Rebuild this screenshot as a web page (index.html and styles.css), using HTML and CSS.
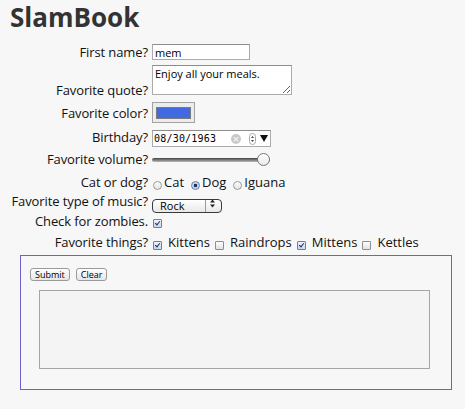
FILE: index.html
```html
<!DOCTYPE html>
<html>
<head>
<meta charset="utf-8">
<link rel="stylesheet" href="styles.css">
</head>
<body>
<h1 class="title">SlamBook</h1>
<form class="slam">
  <div class="grid">
    <label class="lbl l1">First name?</label>
    <input class="txt c1" type="text" value="mem">

    <label class="lbl l2">Favorite quote?</label>
    <textarea class="quote c2">Enjoy all your meals.</textarea>

    <label class="lbl l3">Favorite color?</label>
    <input class="color c3" type="color" value="#4169e1">

    <label class="lbl l4">Birthday?</label>
    <div class="date c4">
      <input class="date-text" type="text" value="08/30/1963">
      <span class="date-clear">×</span>
      <span class="date-spin"><svg width="7" height="12" viewBox="0 0 7 12"><rect x="0.5" y="0.5" width="6" height="11" rx="3" fill="#fff" stroke="#aaa"/><path d="M2 5 L3.5 3 L5 5Z M2 7 L3.5 9 L5 7Z" fill="#444"/></svg></span>
      <span class="date-drop"><svg width="8" height="7" viewBox="0 0 8 7"><path d="M0 0 H8 L4 7Z" fill="#111"/></svg></span>
    </div>

    <label class="lbl l5">Favorite volume?</label>
    <input class="range c5" type="range" min="0" max="100" value="100">

    <label class="lbl l6">Cat or dog?</label>
    <div class="choices c6">
      <input class="radio" type="radio" name="pet"><span class="opt">Cat</span>
      <input class="radio" type="radio" name="pet" checked><span class="opt">Dog</span>
      <input class="radio" type="radio" name="pet"><span class="opt">Iguana</span>
    </div>

    <label class="lbl l7">Favorite type of music?</label>
    <div class="selwrap c7">
      <select class="music"><option>Rock</option><option>Jazz</option><option>Pop</option></select>
      <svg class="sel-arrows" width="5" height="9" viewBox="0 0 5 9"><path d="M0 3.5 L2.5 0.5 L5 3.5Z M0 5.5 L2.5 8.5 L5 5.5Z" fill="#222"/></svg>
    </div>

    <label class="lbl l8">Check for zombies.</label>
    <div class="c8"><input class="check" type="checkbox" checked></div>

    <label class="lbl l9">Favorite things?</label>
    <div class="things c9">
      <input class="check" type="checkbox" checked><span class="opt">Kittens</span>
      <input class="check" type="checkbox"><span class="opt">Raindrops</span>
      <input class="check" type="checkbox" checked><span class="opt">Mittens</span>
      <input class="check" type="checkbox"><span class="opt">Kettles</span>
    </div>
  </div>

  <fieldset class="box">
    <div class="btns">
      <button class="btn" type="button">Submit</button>
      <button class="btn" type="button">Clear</button>
    </div>
    <div class="output"></div>
  </fieldset>
</form>
</body>
</html>
```

FILE: styles.css
```css
html, body {
  background: #f7f7f7;
}
body {
  margin: 0 8px 8px 8px;
  font-family: "Open Sans", sans-serif;
  font-size: 13px;
  color: #111;
}
.title {
  margin: 2px 0 10px 2px;
  font-family: "Open Sans", sans-serif;
  font-weight: 700;
  font-size: 26px;
  line-height: 30px;
  color: #333;
}
.slam { margin: 0; }
.grid {
  display: grid;
  margin-left: 3px;
  grid-template-columns: 137px auto;
  grid-template-rows: 20px 37px 27px 23px 21px 23px 19px 21px 22px;
  column-gap: 4px;
  align-items: start;
  justify-items: start;
}
.lbl {
  justify-self: end;
  white-space: nowrap;
  line-height: 16px;
  letter-spacing: -0.1px;
}
.l1 { margin-top: 2px; }
.l2 { margin-top: 20px; }
.l3 { margin-top: 6px; }
.l4 { margin-top: 3px; }
.l5 { margin-top: 2px; }
.l6 { margin-top: 4px; }
.l7 { margin-top: 0; }
.l8 { margin-top: 1px; }
.l9 { margin-top: 1px; }

.c1 { margin-top: 2px; }
.c2 { margin-top: 3px; }
.c3 { margin-top: 3px; }
.c4 { margin-top: 4px; }
.c5 { margin-top: 4px; }
.c6 { margin-top: 4px; }
.c7 { margin-top: 3px; }
.c8 { margin-top: 7px; }
.c9 { margin-top: 1px; }

.txt {
  box-sizing: border-box;
  width: 98px;
  height: 16px;
  margin-left: 0;
  margin-right: 0;
  border: 1px solid #ababab;
  border-top-color: #8c8c8c;
  padding: 0 2px;
  font-family: "Open Sans", sans-serif;
  font-size: 11px;
  color: #000;
  background: #fff;
  outline: none;
}
.quote {
  box-sizing: border-box;
  width: 140px;
  height: 30px;
  margin-left: 0;
  margin-bottom: 0;
  border: 1px solid #ababab;
  border-top-color: #8c8c8c;
  padding: 1px 2px;
  font-family: "Open Sans", sans-serif;
  font-size: 11px;
  line-height: 13px;
  color: #000;
  background: #fff;
  resize: both;
  display: block;
}
.color {
  -webkit-appearance: none;
  appearance: none;
  box-sizing: border-box;
  width: 43px;
  height: 21px;
  margin: 3px 0 0 0;
  padding: 0;
  border: 1px solid #a3a3a3;
  background: #ececec;
}
.color::-webkit-color-swatch-wrapper {
  padding: 4px 3px 3px 3px;
}
.color::-webkit-color-swatch {
  border: 1px solid #7a7a7a;
}

.date {
  box-sizing: border-box;
  width: 119px;
  height: 17px;
  display: flex;
  align-items: center;
  border: 1px solid #ababab;
  border-top-color: #8c8c8c;
  background: #fff;
}
.date-text {
  width: 76px;
  border: none;
  padding: 0 0 0 1px;
  margin: 0;
  font-family: "DejaVu Sans Mono", monospace;
  font-size: 10px;
  letter-spacing: 0.2px;
  color: #000;
  background: transparent;
  outline: none;
}
.date-clear {
  width: 10px;
  height: 10px;
  border-radius: 50%;
  background: #c8c8c8;
  color: #fff;
  font-family: "DejaVu Sans", sans-serif;
  font-size: 9px;
  line-height: 10px;
  text-align: center;
  margin-left: 1px;
}
.date-spin {
  display: flex;
  margin-left: 8px;
}
.date-drop {
  display: flex;
  margin-left: 4px;
}

.range {
  -webkit-appearance: none;
  appearance: none;
  width: 118px;
  height: 13px;
  margin: 4px 0 0 0;
  padding: 0;
  background: transparent;
}
.range::-webkit-slider-runnable-track {
  height: 4px;
  border-radius: 2px;
  background: linear-gradient(#444, #888 60%, #bbb);
}
.range::-webkit-slider-thumb {
  -webkit-appearance: none;
  appearance: none;
  width: 13px;
  height: 13px;
  margin-top: -4.5px;
  border-radius: 50%;
  border: 1px solid #777;
  background: linear-gradient(#fff, #e9e9e9);
  box-sizing: border-box;
}

.choices, .things {
  display: flex;
  align-items: flex-start;
  line-height: 16px;
  white-space: nowrap;
}
.radio {
  -webkit-appearance: none;
  appearance: none;
  box-sizing: border-box;
  width: 9px;
  height: 9px;
  margin: 7px 2px 0 1px;
  border: 1px solid #9a9a9a;
  border-radius: 50%;
  background: linear-gradient(#fdfdfd, #e4e4e4);
}
.radio:checked {
  border-color: #6a7fa8;
  background: radial-gradient(circle, #1f3561 0 1.4px, #b9c9e6 1.9px, #dde6f5);
}
.choices .opt { margin-right: 6px; }

.selwrap {
  position: relative;
  width: 70px;
  height: 14px;
}
.music {
  -webkit-appearance: none;
  appearance: none;
  box-sizing: border-box;
  width: 70px;
  height: 14px;
  margin: 0;
  padding: 0 0 0 7px;
  border: 1px solid #3a3a3a;
  border-radius: 4px;
  font-family: "Open Sans", sans-serif;
  font-size: 11px;
  line-height: 12px;
  color: #000;
  background:
    linear-gradient(to right, transparent 52px, #9a9a9a 52px, #9a9a9a 53px, transparent 53px),
    linear-gradient(#ffffff, #e8e8e8);
  outline: none;
}
.sel-arrows {
  position: absolute;
  left: 58px;
  top: 2.5px;
  pointer-events: none;
}

.check {
  -webkit-appearance: none;
  appearance: none;
  box-sizing: border-box;
  position: relative;
  width: 9px;
  height: 9px;
  margin: 0;
  border: 1px solid #8e8e8e;
  border-radius: 1px;
  background: linear-gradient(#fdfdfd, #e2e2e2);
}
.check:checked {
  border-color: #6a7fa8;
  background: linear-gradient(#eef3fb, #c9d6ee);
}
.check:checked::after {
  content: "";
  position: absolute;
  left: 2px;
  top: 0px;
  width: 2px;
  height: 4px;
  border: solid #1e3566;
  border-width: 0 1.5px 1.5px 0;
  transform: rotate(40deg);
}
.c8 .check { display: block; margin-left: 1px; }
.things .check { margin: 7px 6px 0 5px; }
.things .check:first-child { margin-left: 1px; }
.things .opt { margin-right: 0; }

.box {
  box-sizing: border-box;
  width: 432px;
  height: 135px;
  margin: 0 0 0 12px;
  padding: 12px 0 0 9px;
  border: 1px solid #6f5fd2;
  min-inline-size: 0;
}
.btns {
  display: flex;
  gap: 6px;
}
.btn {
  box-sizing: border-box;
  height: 13px;
  margin: 0;
  padding: 0 4px;
  border: 1px solid #9a9a9a;
  border-radius: 3px;
  font-family: "Open Sans", sans-serif;
  font-size: 9px;
  line-height: 11px;
  color: #000;
  background: linear-gradient(#ffffff, #e6e6e6);
}
.output {
  box-sizing: border-box;
  width: 391px;
  height: 79px;
  margin: 9px 0 0 9px;
  border: 1px solid #a5a5a5;
  background: #f4f4f4;
}
```
